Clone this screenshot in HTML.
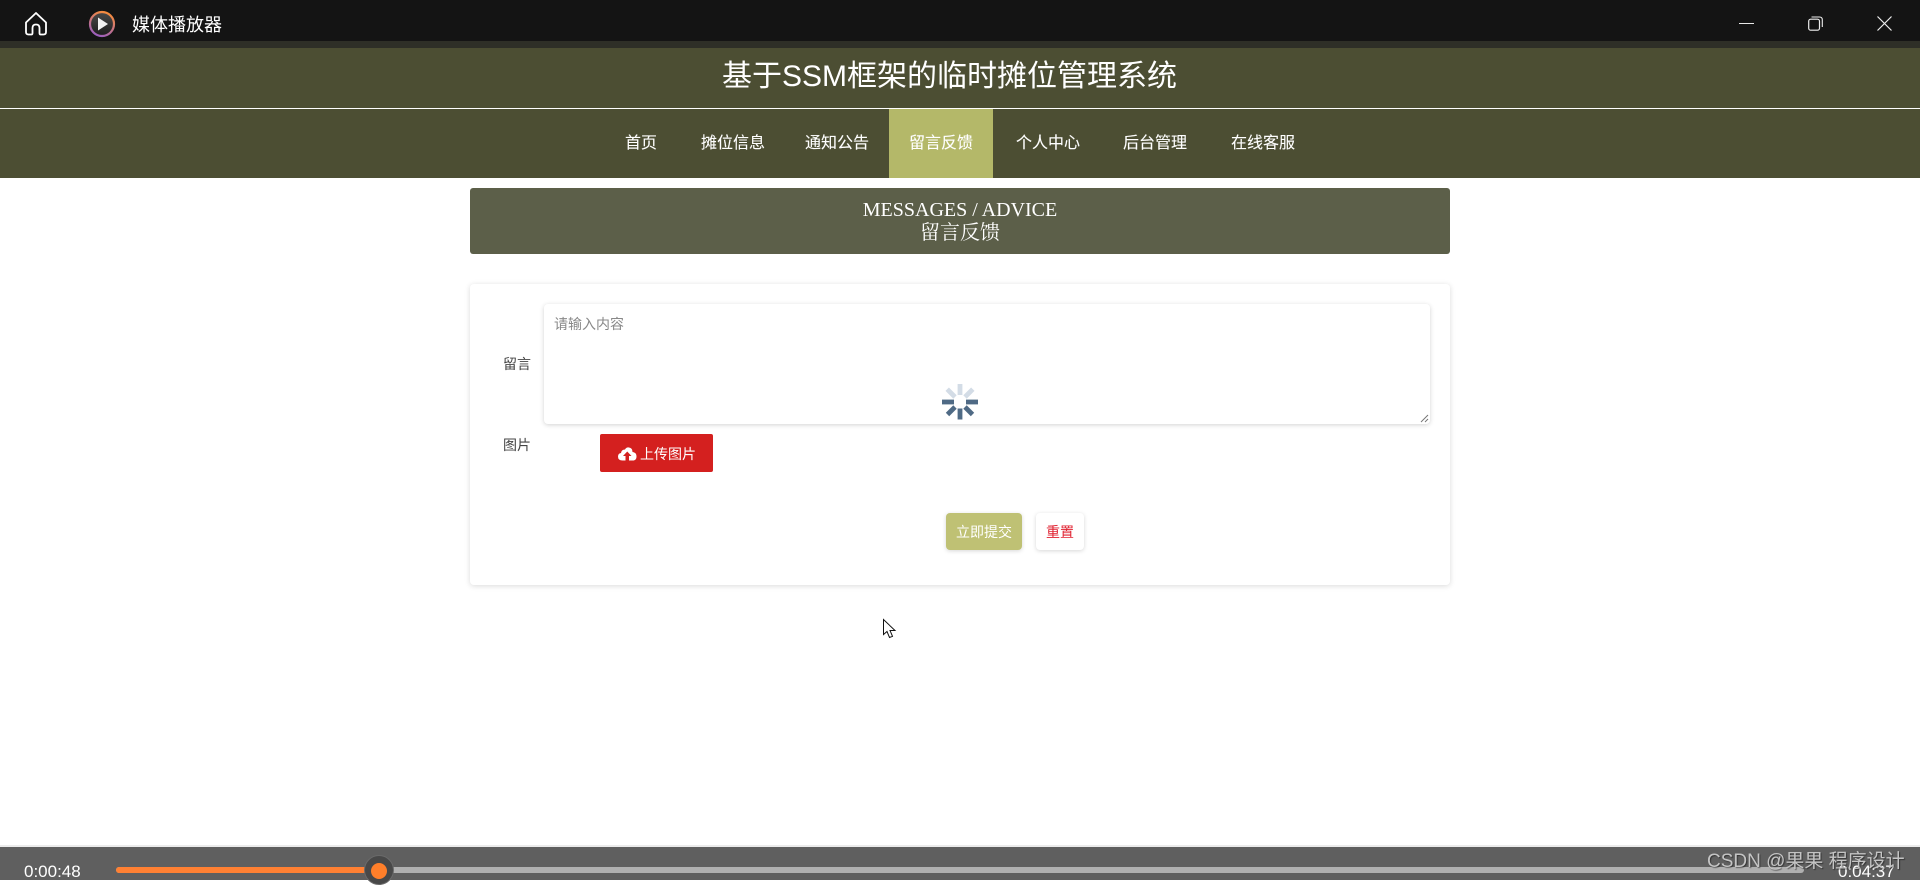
<!DOCTYPE html>
<html lang="zh"><head><meta charset="utf-8"><title>媒体播放器</title>
<style>
html,body{margin:0;padding:0;width:1920px;height:880px;overflow:hidden;background:#fff;font-family:"Liberation Sans","Noto Sans CJK SC",sans-serif}
.b{position:absolute}
.t{position:absolute;white-space:nowrap;line-height:20px;height:20px}
.n{color:#fff;font-size:16px;top:134px;-webkit-text-stroke:.1px #fff}
.l{color:#444;font-size:14px}
svg{position:absolute;overflow:visible}
</style></head><body>
<div class="b" style="left:0;top:0;width:1920px;height:41px;background:#141414"></div>
<div class="b" style="left:0;top:41px;width:1920px;height:7px;background:#2e2f27"></div>
<svg style="left:24px;top:11px" width="24" height="25" viewBox="0 0 24 25"><path d="M2 11.500 L12 2 L22 11.500 V21 Q22 23.500 19.500 23.500 H16.500 Q15.500 23.500 15.500 22 V17 Q15.500 13.500 12 13.500 Q8.500 13.500 8.500 17 V22 Q8.500 23.500 7.500 23.500 H4.500 Q2 23.500 2 21 Z" fill="none" stroke="#fff" stroke-width="1.800" stroke-linejoin="round"/></svg>
<svg style="left:88px;top:10px" width="28" height="28" viewBox="0 0 28 28"><defs><linearGradient id="g" x1="0.700" y1="0" x2="0.300" y2="1"><stop offset="0" stop-color="#f98d3a"/><stop offset="1" stop-color="#9a5ec0"/></linearGradient><linearGradient id="d" x1="0" y1="0" x2="0" y2="1"><stop offset="0" stop-color="#4a4a4a"/><stop offset="1" stop-color="#1c1c1c"/></linearGradient></defs><circle cx="14" cy="14" r="12" fill="url(#d)" stroke="url(#g)" stroke-width="2.200"/><path d="M10 7.500 L20 14 L10 20.500 Z" fill="#f2f2f2"/></svg>
<div class="t" style="left:132px;top:15px;font-size:18px;color:#fff">媒体播放器</div>
<div class="b" style="left:1739px;top:23px;width:15px;height:1px;background:#e8e8e8"></div>
<svg style="left:1808px;top:16px" width="15" height="15" viewBox="0 0 15 15"><rect x="0.700" y="3.200" width="10.800" height="11" rx="2" fill="none" stroke="#eee" stroke-width="1.200"/><path d="M3.500 1 H11.500 Q14.300 1 14.300 3.800 V11" fill="none" stroke="#eee" stroke-width="1.100"/></svg>
<svg style="left:1877px;top:16px" width="15" height="15" viewBox="0 0 15 15"><path d="M0.500 0.500 L14.500 14.500 M14.500 0.500 L0.500 14.500" stroke="#eee" stroke-width="1.200"/></svg>
<div class="b" style="left:0;top:48px;width:1920px;height:130px;background:#4c4e33"></div>
<div class="b" style="left:0;top:108px;width:1920px;height:1px;background:#fff"></div>
<div class="t" style="left:722px;top:57px;height:40px;line-height:40px;font-size:30px;color:#fff">基于SSM框架的临时摊位管理系统</div>
<div class="b" style="left:889px;top:109px;width:104px;height:69px;background:#b4b869"></div>
<div class="t n" style="left:625px">首页</div>
<div class="t n" style="left:701px">摊位信息</div>
<div class="t n" style="left:805px">通知公告</div>
<div class="t n" style="left:909px">留言反馈</div>
<div class="t n" style="left:1016px">个人中心</div>
<div class="t n" style="left:1123px">后台管理</div>
<div class="t n" style="left:1231px">在线客服</div>
<div class="b" style="left:470px;top:188px;width:980px;height:66px;background:#5c5f49;border-radius:3px"></div>
<div class="t" style="left:470px;width:980px;text-align:center;top:200px;font-size:20px;color:#fff;font-family:'Liberation Serif','Noto Serif CJK SC',serif">MESSAGES / ADVICE</div>
<div class="t" style="left:470px;width:980px;text-align:center;top:223px;font-size:20px;color:#fff;font-family:'Liberation Serif','Noto Serif CJK SC',serif">留言反馈</div>
<div class="b" style="left:470px;top:284px;width:980px;height:301px;background:#fff;border-radius:4px;box-shadow:0 1px 6px rgba(0,0,0,.15)"></div>
<div class="b" style="left:544px;top:304px;width:886px;height:120px;background:#fff;border-radius:4px;box-shadow:0 1px 5px rgba(0,0,0,.18)"></div>
<div class="t" style="left:554px;top:314px;font-size:14px;color:#888">请输入内容</div>
<svg style="left:1420px;top:414px" width="9" height="9" viewBox="0 0 9 9"><path d="M1 8 L8 1 M5 8 L8 5" stroke="#777" stroke-width="1"/></svg>
<div class="t l" style="left:503px;top:354px">留言</div>
<div class="t l" style="left:503px;top:435px">图片</div>
<div class="b" style="left:600px;top:434px;width:113px;height:38px;background:#d4201f;border-radius:2px"></div>
<svg style="left:618px;top:447px" width="19" height="14" viewBox="0 0 19 14"><path d="M4.500 13.500 Q0 13.500 0 9.500 Q0 6.500 3 6 Q3.500 2.500 7 2.500 Q8.500 0 11 0.500 Q14.500 1 14.500 5 Q18.500 5.500 18.500 9.500 Q18.500 13.500 14.500 13.500 H11 V9 H13.500 L9.250 4.500 L5 9 H7.500 V13.500 Z" fill="#fff"/></svg>
<div class="t" style="left:640px;top:444px;font-size:14px;color:#fff">上传图片</div>
<svg style="left:940px;top:383px" width="40" height="38" viewBox="-20 -19 40 38">
<g stroke-width="4.800" stroke-linecap="butt">
<path d="M0 -18 V-7" stroke="#d3dce6"/><path d="M-12.800 -12.800 L-5 -5" stroke="#d3dce6"/><path d="M12.800 -12.800 L5 -5" stroke="#d3dce6"/>
<path d="M-18 0 H-6" stroke="#4f6a85"/><path d="M18 0 H6" stroke="#4f6a85"/><path d="M0 17.500 V6.500" stroke="#4f6a85"/><path d="M-12.500 12.500 L-5 5" stroke="#4f6a85"/><path d="M12.500 12.500 L5 5" stroke="#4f6a85"/>
</g></svg>
<div class="b" style="left:946px;top:513px;width:76px;height:37px;background:#bfc174;border-radius:4px;box-shadow:0 1px 4px rgba(0,0,0,.16)"></div>
<div class="t" style="left:956px;top:522px;font-size:14px;color:#fff">立即提交</div>
<div class="b" style="left:1036px;top:513px;width:48px;height:37px;background:#fff;border-radius:4px;box-shadow:0 1px 4px rgba(0,0,0,.16)"></div>
<div class="t" style="left:1046px;top:522px;font-size:14px;color:#e0202f">重置</div>
<svg style="left:883px;top:619px" width="13" height="20" viewBox="0 0 13 20"><path d="M0.500 0.500 V15.500 L4 12.500 L6.500 18.500 L9.500 17.300 L7 11.500 H12 Z" fill="#fff" stroke="#111" stroke-width="1"/></svg>
<div class="b" style="left:0;top:845px;width:1920px;height:2px;background:#ececec"></div>
<div class="b" style="left:0;top:847px;width:1920px;height:33px;background:#5f5f5f"></div>
<div class="t" style="left:24px;top:862px;font-size:17px;color:#fff">0:00:48</div>
<div class="b" style="left:116px;top:867px;width:1688px;height:6px;background:#b0b0b0;border-radius:3px"></div>
<div class="b" style="left:116px;top:867px;width:252px;height:6px;background:#ff8033;border-radius:3px 0 0 3px"></div>
<div class="b" style="left:364px;top:855px;width:28px;height:28px;border-radius:50%;background:#484848;border:1px solid #6a6a6a"></div>
<div class="b" style="left:371px;top:863px;width:16px;height:16px;border-radius:50%;background:#ff7f2a"></div>
<div class="t" style="left:1838px;top:862px;font-size:17px;color:#fff">0:04:37</div>
<div class="t" style="left:1707px;top:852px;font-size:19px;color:#c4c4c4;text-shadow:1px 1px 1px rgba(0,0,0,.45)">CSDN @果果 程序设计</div>
</body></html>
